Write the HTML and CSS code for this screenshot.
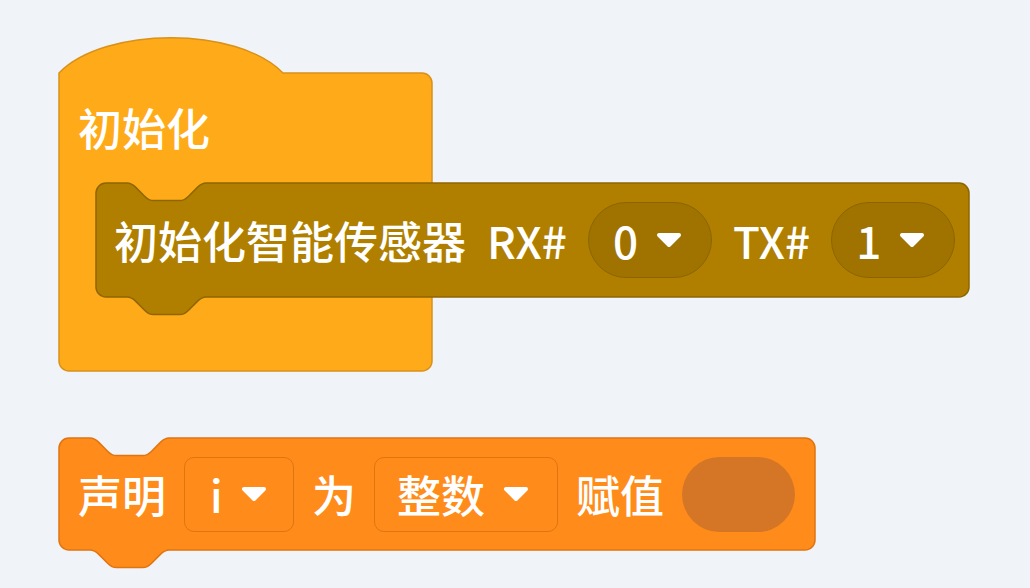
FILE: index.html
```html
<!DOCTYPE html>
<html lang="zh-CN">
<head>
  <meta charset="UTF-8">
  <meta name="viewport" content="width=device-width, initial-scale=1.0">
  <title>积木编程</title>
  <link rel="stylesheet" href="styles.css">
</head>
<body>
  <div class="workspace">

    <!-- 初始化 (hat + C block) -->
    <div class="stack stack-init">
      <svg class="shape" width="376" height="334" viewBox="-1 -1 376 334">
        <path class="fill-events" d="M0,33 C46,-14 178,-14 224,33 H363 A10,10 0 0 1 373,43 V321 A10,10 0 0 1 363,331 H10 A10,10 0 0 1 0,321 Z"/>
      </svg>
      <div class="hat-label">初始化</div>

      <div class="block block-sensor">
        <svg class="shape" width="876" height="136" viewBox="-1 -1 876 136">
          <path class="fill-sensor" d="M0,10 A10,10 0 0 1 10,0 H31 c4.4,0 6.6,2.2 8.8,4.4 l8.8,8.8 c2.2,2.2 4.4,4.4 8.8,4.4 h26.4 c4.4,0 6.6,-2.2 8.8,-4.4 l8.8,-8.8 c2.2,-2.2 4.4,-4.4 8.8,-4.4 H863 A10,10 0 0 1 873,10 V104 A10,10 0 0 1 863,114 H110.2 c-4.4,0 -6.6,2.2 -8.8,4.4 l-8.8,8.8 c-2.2,2.2 -4.4,4.4 -8.8,4.4 h-26.4 c-4.4,0 -6.6,-2.2 -8.8,-4.4 l-8.8,-8.8 c-2.2,-2.2 -4.4,-4.4 -8.8,-4.4 H10 A10,10 0 0 1 0,104 Z"/>
        </svg>
        <span class="label">初始化智能传感器</span>
        <span class="label">RX#</span>
        <span class="pill">
          <span class="value">0</span>
          <svg class="arrow" width="26" height="16" viewBox="0 0 26 16"><polygon points="3,3 23,3 13,13"/></svg>
        </span>
        <span class="label">TX#</span>
        <span class="pill">
          <span class="value">1</span>
          <svg class="arrow" width="26" height="16" viewBox="0 0 26 16"><polygon points="3,3 23,3 13,13"/></svg>
        </span>
      </div>
    </div>

    <!-- 声明变量 -->
    <div class="stack stack-declare">
      <div class="block block-declare">
        <svg class="shape" width="759" height="134" viewBox="-1 -1 759 134">
          <path class="fill-vars" d="M0,10 A10,10 0 0 1 10,0 H31 c4.4,0 6.6,2.2 8.8,4.4 l8.8,8.8 c2.2,2.2 4.4,4.4 8.8,4.4 h26.4 c4.4,0 6.6,-2.2 8.8,-4.4 l8.8,-8.8 c2.2,-2.2 4.4,-4.4 8.8,-4.4 H746 A10,10 0 0 1 756,10 V102 A10,10 0 0 1 746,112 H110.2 c-4.4,0 -6.6,2.2 -8.8,4.4 l-8.8,8.8 c-2.2,2.2 -4.4,4.4 -8.8,4.4 h-26.4 c-4.4,0 -6.6,-2.2 -8.8,-4.4 l-8.8,-8.8 c-2.2,-2.2 -4.4,-4.4 -8.8,-4.4 H10 A10,10 0 0 1 0,102 Z"/>
        </svg>
        <span class="label">声明</span>
        <span class="dropdown dropdown-var">
          <span class="value">i</span>
          <svg class="arrow" width="26" height="16" viewBox="0 0 26 16"><polygon points="3,3 23,3 13,13"/></svg>
        </span>
        <span class="label">为</span>
        <span class="dropdown dropdown-type">
          <span class="value">整数</span>
          <svg class="arrow" width="26" height="16" viewBox="0 0 26 16"><polygon points="3,3 23,3 13,13"/></svg>
        </span>
        <span class="label">赋值</span>
        <span class="slot"></span>
      </div>
    </div>

  </div>
</body>
</html>
```

FILE: styles.css
```css
body {
  margin: 0;
  background: #f0f3f8;
  font-family: "Noto Sans CJK SC", "Noto Sans", sans-serif;
}
.workspace {
  position: relative;
  width: 1030px;
  height: 588px;
  overflow: hidden;
  background: #f0f3f8;
}
.stack {
  position: absolute;
}
.stack-init {
  left: 59px;
  top: 40px;
  width: 374px;
  padding-top: 65px;
  padding-bottom: 74px;
}
.stack-declare {
  left: 59px;
  top: 438px;
}
.shape {
  position: absolute;
  left: -1px;
  top: -1px;
  overflow: visible;
}
.fill-events {
  fill: #ffab19;
  stroke: #d99118;
  stroke-width: 1.5;
}
.fill-sensor {
  fill: #b07f00;
  stroke: #8e6600;
  stroke-width: 1.5;
}
.fill-vars {
  fill: #ff8c1a;
  stroke: #e07410;
  stroke-width: 1.5;
}
.hat-label {
  position: relative;
  margin: 0 0 34px 19px;
  color: #fff;
  font-size: 44px;
  line-height: 44px;
  font-weight: 500;
}
.block {
  position: relative;
  display: flex;
  align-items: center;
  box-sizing: border-box;
  color: #fff;
  font-size: 44px;
  line-height: 44px;
  font-weight: 500;
}
.block > span {
  position: relative;
}
.block-sensor {
  width: 873px;
  height: 114px;
  margin-left: 37px;
  padding-left: 18px;
  gap: 21px;
}
.block-declare {
  width: 756px;
  height: 112px;
  padding-left: 19px;
  gap: 18px;
}
.label {
  white-space: pre;
}
.pill {
  display: flex;
  align-items: center;
  box-sizing: border-box;
  height: 76px;
  width: 124px;
  padding-left: 24px;
  gap: 18px;
  border-radius: 38px;
  background: #a07300;
  border: 1.5px solid #8c6500;
}
.dropdown {
  display: flex;
  align-items: center;
  box-sizing: border-box;
  height: 75px;
  gap: 18px;
  border-radius: 10px;
  background: #ff8c1a;
  border: 1.5px solid #e07410;
}
.dropdown-var {
  width: 110px;
  padding-left: 25px;
}
.dropdown-type {
  width: 184px;
  padding-left: 22px;
}
.arrow polygon {
  fill: #fff;
  stroke: #fff;
  stroke-width: 4;
  stroke-linejoin: round;
}
.slot {
  width: 113px;
  height: 75px;
  border-radius: 38px;
  background: #d57626;
}
```
